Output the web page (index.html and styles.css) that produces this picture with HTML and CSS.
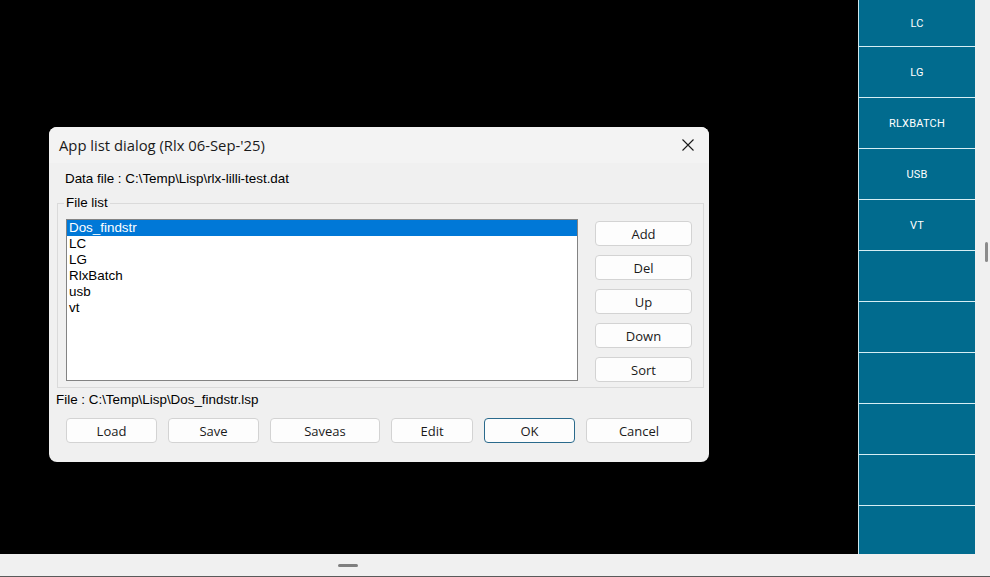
FILE: index.html
```html
<!DOCTYPE html>
<html>
<head>
<meta charset="utf-8">
<link rel="stylesheet" href="styles.css">
</head>
<body>
<div class="screen">
  <div class="top">
    <div class="canvas">
      <div class="dialog">
        <div class="titlebar">
          <span class="title">App list dialog (Rlx 06-Sep-'25)</span>
          <svg class="close" width="12" height="12" viewBox="0 0 12 12"><path d="M0.5 0.5 L11.5 11.5 M11.5 0.5 L0.5 11.5" stroke="#1a1a1a" stroke-width="1.1" fill="none"/></svg>
        </div>
        <div class="body">
          <div class="line data">Data file : C:\Temp\Lisp\rlx-lilli-test.dat</div>
          <fieldset class="group">
            <legend>File list</legend>
            <div class="group-inner">
              <div class="listbox">
                <div class="item sel">Dos_findstr</div>
                <div class="item">LC</div>
                <div class="item">LG</div>
                <div class="item">RlxBatch</div>
                <div class="item">usb</div>
                <div class="item">vt</div>
              </div>
              <div class="side-btns">
                <div class="btn">Add</div>
                <div class="btn">Del</div>
                <div class="btn">Up</div>
                <div class="btn">Down</div>
                <div class="btn">Sort</div>
              </div>
            </div>
          </fieldset>
          <div class="line file">File : C:\Temp\Lisp\Dos_findstr.lsp</div>
          <div class="actions">
            <div class="btn w91">Load</div>
            <div class="btn w91">Save</div>
            <div class="btn w110">Saveas</div>
            <div class="btn w82">Edit</div>
            <div class="btn w91 default">OK</div>
            <div class="btn w106">Cancel</div>
          </div>
        </div>
      </div>
    </div>
    <div class="palette">
      <div class="cell first">LC</div>
      <div class="cell">LG</div>
      <div class="cell">RLXBATCH</div>
      <div class="cell">USB</div>
      <div class="cell">VT</div>
      <div class="cell"></div>
      <div class="cell"></div>
      <div class="cell"></div>
      <div class="cell"></div>
      <div class="cell"></div>
      <div class="cell last"></div>
    </div>
    <div class="strip"><div class="thumb"></div></div>
  </div>
  <div class="bottombar"><div class="handle"></div></div>
</div>
</body>
</html>
```

FILE: styles.css
```css
html, body {
  margin: 0;
  padding: 0;
  background: #000;
  width: 990px;
  height: 577px;
  overflow: hidden;
}
.screen {
  display: grid;
  grid-template-rows: 554px 23px;
  height: 577px;
}
.top {
  display: flex;
}
.canvas {
  width: 858px;
  flex: none;
  background: #000;
  box-sizing: border-box;
  padding: 127px 0 0 49px;
}
.dialog {
  width: 660px;
  height: 335px;
  background: #f0f0f0;
  border-radius: 8px;
  overflow: hidden;
  display: flex;
  flex-direction: column;
}
.titlebar {
  height: 36px;
  flex: none;
  background: #f3f3f3;
  display: flex;
  align-items: center;
  justify-content: space-between;
  padding: 0 15px 0 10px;
}
.title {
  font-family: "Open Sans", "Noto Sans", sans-serif;
  font-size: 14.8px;
  color: #1a1a1a;
}
.close {
  display: block;
}
.body {
  padding: 8px 5px 0 8px;
  font-family: "Liberation Sans", Arial, sans-serif;
  font-size: 13.4px;
  color: #000;
}
.line {
  height: 16px;
  line-height: 16px;
  white-space: nowrap;
}
.data {
  margin-left: 8px;
}
.group {
  margin: 9px 0 0 0;
  border: 1px solid #dadada;
  padding: 9px 10px 5px 8px;
  min-width: 0;
}
.group legend {
  padding: 0 2px;
  margin-left: -2px;
  line-height: 14px;
  font-size: 13.4px;
}
.group-inner {
  display: flex;
  align-items: flex-start;
  gap: 17px;
}
.listbox {
  width: 512px;
  height: 162px;
  box-sizing: border-box;
  border: 1px solid #838383;
  background: #fff;
  flex: none;
}
.item {
  height: 16px;
  line-height: 16px;
  padding-left: 2px;
}
.item.sel {
  background: #0078d7;
  color: #fff;
}
.side-btns {
  display: flex;
  flex-direction: column;
  gap: 9px;
  margin-top: 2px;
  width: 97px;
}
.btn {
  height: 25px;
  box-sizing: border-box;
  border: 1px solid #d3d3d3;
  border-radius: 4px;
  background: #fdfdfd;
  font-family: "Open Sans", "Noto Sans", sans-serif;
  font-size: 13px;
  color: #1a1a1a;
  display: flex;
  align-items: center;
  justify-content: center;
  flex: none;
}
.btn.default {
  border-color: #2a6a8c;
}
.file {
  margin-top: 4px;
  margin-left: -1px;
}
.actions {
  margin-top: 10px;
  margin-left: 9px;
  display: flex;
  gap: 11px;
}
.w91 { width: 91px; }
.w110 { width: 110px; }
.w82 { width: 82px; }
.w106 { width: 106px; }

.palette {
  width: 117px;
  flex: none;
  box-sizing: border-box;
  border-left: 1px solid #cfe7ee;
  background: #016b8e;
  display: flex;
  flex-direction: column;
  overflow: hidden;
}
.cell {
  height: 50px;
  flex: none;
  border-bottom: 1px solid #d6eef4;
  display: flex;
  align-items: center;
  justify-content: center;
  font-family: Roboto, "DejaVu Sans", sans-serif;
  font-weight: 400;
  font-size: 11px;
  color: #ffffff;
  letter-spacing: 0.2px;
}
.cell.first {
  height: 46px;
}
.cell.last {
  flex: 1;
  border-bottom: none;
}
.strip {
  flex: 1;
  background: #f0f0f0;
  padding: 242px 0 0 10px;
}
.thumb {
  width: 3px;
  height: 20px;
  background: #8b8b8b;
  border-radius: 2px;
}
.bottombar {
  background: #f0f0f0;
  box-sizing: border-box;
  border-bottom: 1px solid #5a5a5a;
  padding: 10px 0 0 338px;
}
.handle {
  width: 20px;
  height: 3px;
  background: #7f7f7f;
  border-radius: 2px;
}
```
